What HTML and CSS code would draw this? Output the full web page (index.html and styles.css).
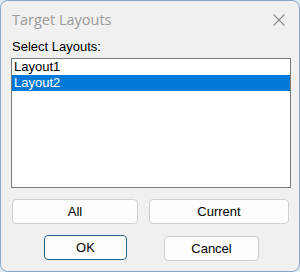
FILE: index.html
```html
<!DOCTYPE html>
<html lang="en">
<head>
  <meta charset="UTF-8" />
  <title>Target Layouts</title>
  <link rel="stylesheet" href="styles.css">
</head>
<body>
  <div class="window">
    <div class="titlebar">
      <span class="title">Target Layouts</span>
      <button class="close" aria-label="Close">
        <svg width="12" height="12" viewBox="0 0 12 12">
          <path d="M0.5 0.5 L11.5 11.5 M11.5 0.5 L0.5 11.5" stroke="#8c8c8c" stroke-width="1.1" fill="none" />
        </svg>
      </button>
    </div>

    <div class="content">
      <label for="layouts">Select Layouts:</label>
      <ul id="layouts" class="listbox">
        <li>Layout1</li>
        <li class="selected">Layout2</li>
      </ul>

      <div class="row scope">
        <button class="btn">All</button>
        <button class="btn">Current</button>
      </div>

      <div class="row actions">
        <button class="btn btn-ok">OK</button>
        <button class="btn btn-cancel">Cancel</button>
      </div>
    </div>
  </div>
</body>
</html>
```

FILE: styles.css
```css
body {
  margin: 0;
  background-color: #dfe9f3;
  font-family: "Liberation Sans", Arial, sans-serif;
}
.window {
  width: 300px;
  height: 272px;
  box-sizing: border-box;
  border: 1px solid #86a9cb;
  border-radius: 8px;
  background-color: #f0f0f0;
  overflow: hidden;
}
.titlebar {
  height: 37px;
  display: flex;
  align-items: center;
  justify-content: space-between;
  padding: 0 0 0 11px;
}
.title {
  font-family: "Open Sans", "Noto Sans", sans-serif;
  font-size: 14.5px;
  color: #9a9a9a;
  margin-top: -1px;
}
.close {
  border: none;
  background: none;
  padding: 0;
  margin: 0 14px 0 0;
  width: 12px;
  height: 12px;
  display: flex;
}
.content {
  padding: 0 8px 0 10px;
}
label {
  display: block;
  font-size: 13px;
  line-height: 16px;
  margin: 1px 0 3px 1px;
  color: #000;
}
.listbox {
  list-style: none;
  margin: 0;
  padding: 0;
  height: 130px;
  box-sizing: border-box;
  border: 1px solid #7a7a7a;
  background-color: #ffffff;
}
.listbox li {
  font-size: 13px;
  line-height: 16px;
  padding-left: 2px;
  color: #000;
}
.listbox li.selected {
  background-color: #0078d7;
  color: #ffffff;
}
.row {
  display: flex;
}
.scope {
  margin: 11px 0 0 1px;
  gap: 11px;
}
.scope .btn:first-child {
  width: 126px;
}
.scope .btn:last-child {
  width: 140px;
}
.actions {
  margin: 11px 0 0 33px;
  gap: 37px;
}
.btn {
  height: 25px;
  box-sizing: border-box;
  border: 1px solid #d0d0d0;
  border-radius: 4px;
  background-color: #fdfdfd;
  font-family: "Liberation Sans", Arial, sans-serif;
  font-size: 13px;
  color: #000;
  padding: 0;
}
.btn-ok {
  width: 83px;
  border-color: #2f6288;
}
.btn-cancel {
  width: 95px;
  margin-top: 1px;
}
```
